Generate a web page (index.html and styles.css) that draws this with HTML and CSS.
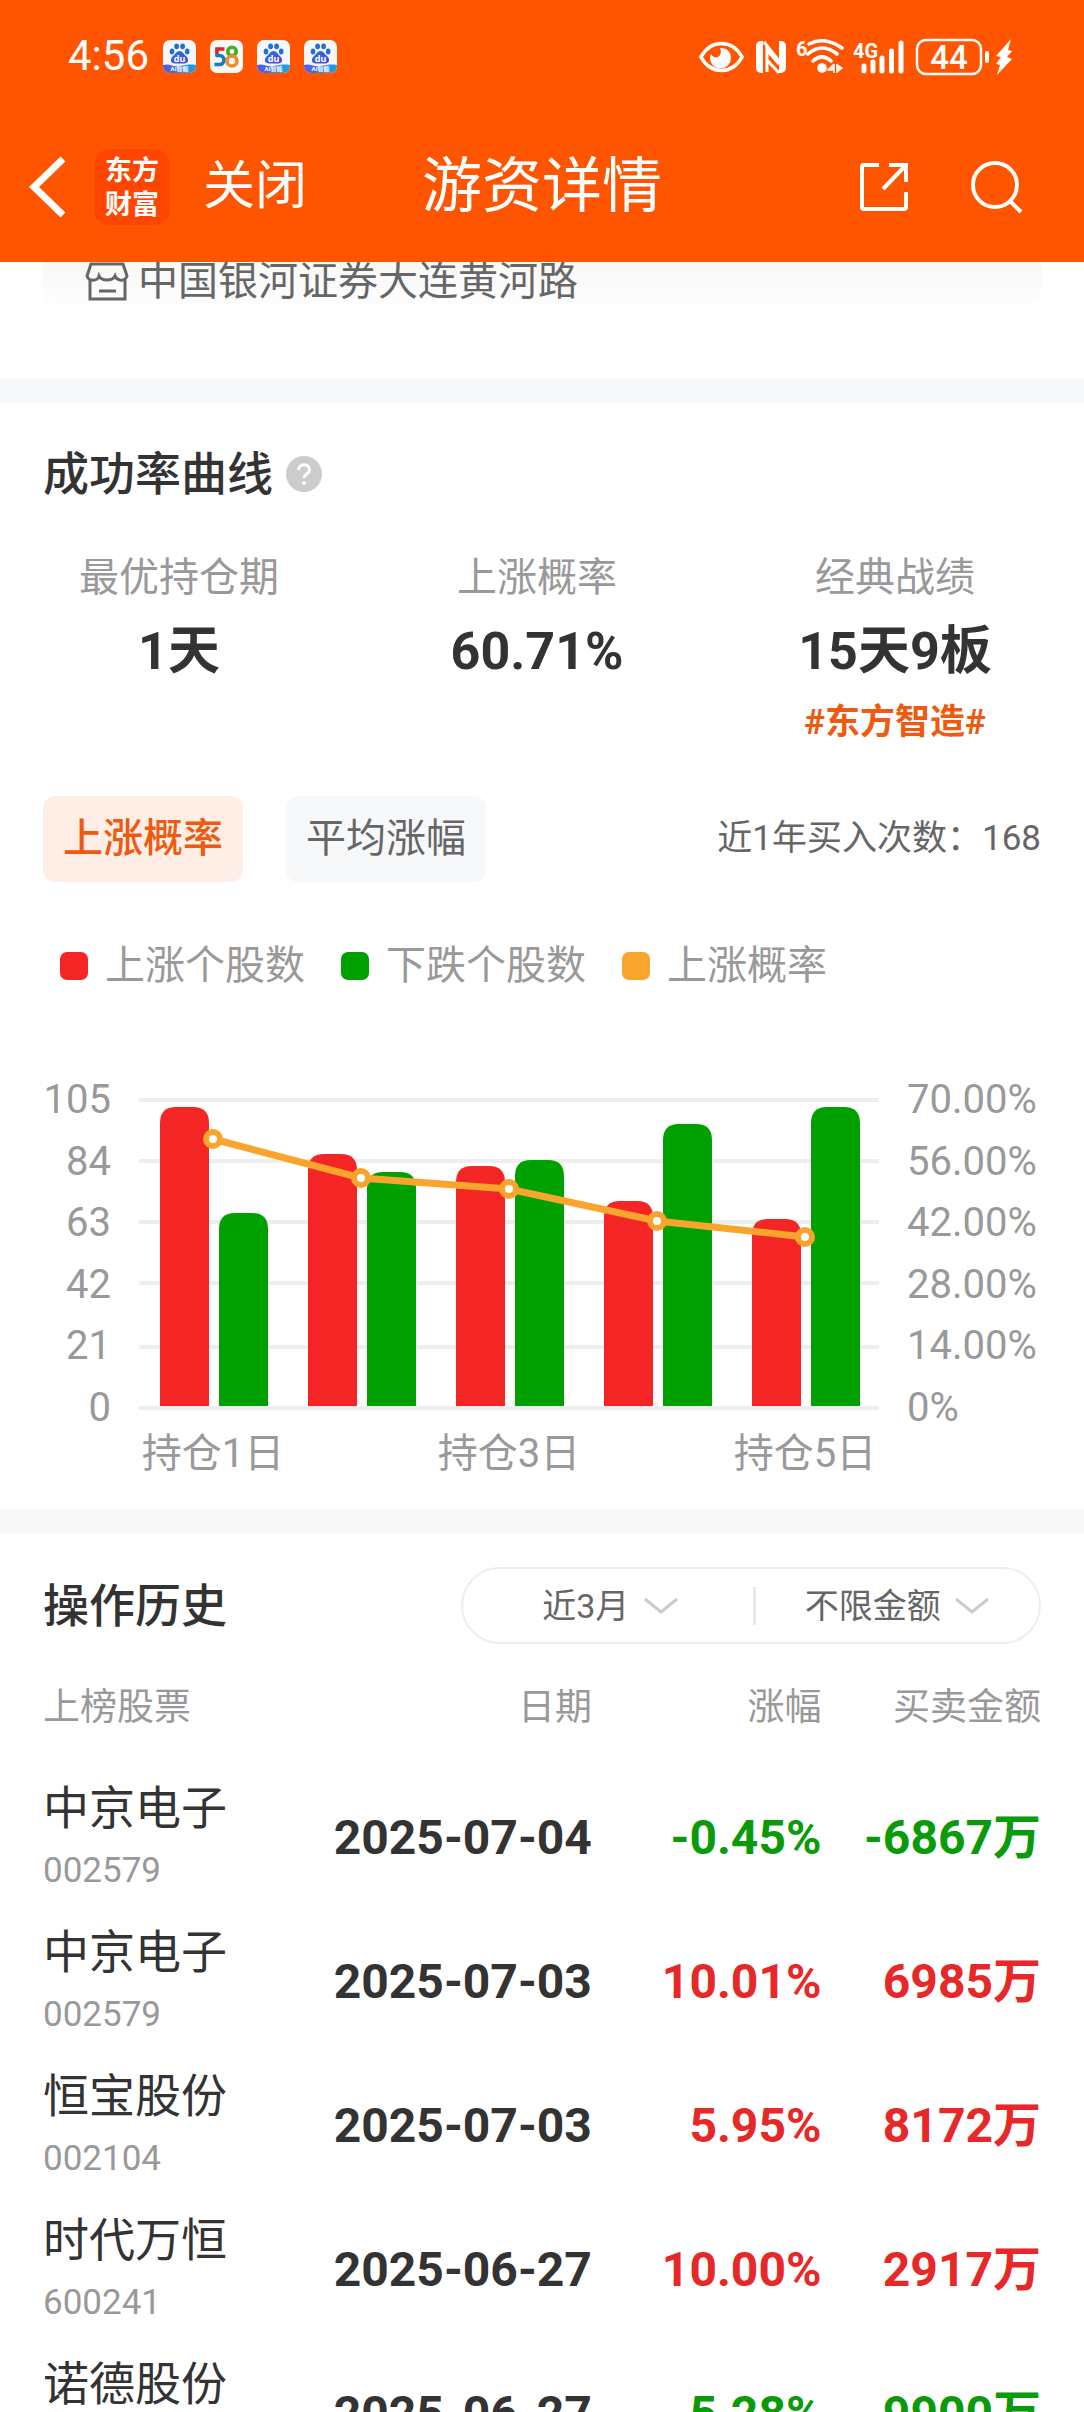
FILE: index.html
```html
<!DOCTYPE html>
<html lang="zh-CN">
<head>
    <meta charset="UTF-8">
    <meta name="viewport" content="width=device-width, initial-scale=1.0">
    <title>游资详情</title>
    <link rel="stylesheet" href="styles.css">
</head>
<body>

<!-- Shared icon shapes -->
<svg class="defs" aria-hidden="true">
    <defs>
        <linearGradient id="paw" x1="0" y1="0" x2="1" y2="1">
            <stop offset="0" stop-color="#1d78dc"/>
            <stop offset="1" stop-color="#5a3fe0"/>
        </linearGradient>
        <linearGradient id="wave" x1="0" y1="0" x2="1" y2="0">
            <stop offset="0" stop-color="#5c55e6"/>
            <stop offset="1" stop-color="#12a5e8"/>
        </linearGradient>
        <clipPath id="tile"><rect width="33" height="33" rx="7"/></clipPath>
        <symbol id="baidu" viewBox="0 0 33 33">
            <g clip-path="url(#tile)">
                <rect width="33" height="33" fill="#f6f7fb"/>
                <g fill="#1f6fd6">
                    <ellipse cx="9" cy="11.500" rx="2.300" ry="2.900"/>
                    <ellipse cx="13.600" cy="6.300" rx="2.400" ry="2.900"/>
                    <ellipse cx="19.600" cy="6.300" rx="2.400" ry="2.900"/>
                    <ellipse cx="24.200" cy="11.500" rx="2.300" ry="2.900"/>
                </g>
                <path d="M16.500 11c3 0 4 3 6.500 5s3.500 7-1.500 7.500h-10C6.500 23 7.500 18 10 16s3.500-5 6.500-5z" fill="url(#paw)"/>
                <text x="16.500" y="22" class="du">du</text>
                <path d="M0 25c6-2 9 2 16 1s11-2 17-1v8H0z" fill="url(#wave)"/>
                <text x="16.500" y="31" class="ai">AI智能</text>
            </g>
        </symbol>
        <symbol id="down" viewBox="0 0 36 20">
            <path d="M2 3l16 13L34 3" fill="none" stroke="#ccc" stroke-width="3"/>
        </symbol>
    </defs>
</svg>

<div class="page">

    <header class="header">
        <!-- Phone status bar -->
        <div class="status">
            <div class="status-left">
                <span class="time">4:56</span>
                <svg class="app-icon"><use href="#baidu"/></svg>
                <svg class="app-icon" viewBox="0 0 33 33">
                    <rect width="33" height="33" rx="7" fill="#f7f7f7"/>
                    <g fill="none" stroke-width="3.600">
                        <path d="M14.500 9H7v7" stroke="#d8252d"/>
                        <path d="M5.500 15.500h4a4.300 4.300 0 0 1 0 9h-5" stroke="#0f7ec2"/>
                        <circle cx="22" cy="11.500" r="4.200" stroke="#3fae2a"/>
                        <circle cx="22" cy="21" r="5" stroke="#ec8e2c"/>
                    </g>
                </svg>
                <svg class="app-icon"><use href="#baidu"/></svg>
                <svg class="app-icon"><use href="#baidu"/></svg>
            </div>
            <!-- Eye, NFC, wifi, signal, battery, charging -->
            <svg class="status-right" viewBox="0 0 320 40">
                <path d="M3 21C14 3 36 3 47 21 36 39 14 39 3 21z" transform="translate(1 0) scale(.94 1)" fill="none" stroke="#fff" stroke-width="3.500"/>
                <path d="M23 12c8 0 11 5 11 10a10.500 10.500 0 0 1-21 0c0-1.500.500-3 1-4 2 4 7 4.500 9 1 1.500-3 1-5 0-7z" fill="#fff"/>
                <g fill="#fff">
                    <path d="M66 5v32h-2a5 5 0 0 1-5-5V10a5 5 0 0 1 5-5z"/>
                    <path d="M82 5h2a5 5 0 0 1 5 5v22a5 5 0 0 1-5 5h-2z"/>
                </g>
                <path d="M67 6L82 25M70 36V14l12 14M70 24l12 13" fill="none" stroke="#fff" stroke-width="3"/>
                <text x="99" y="20" class="mini">6</text>
                <g fill="none" stroke="#fff" stroke-width="3.600" stroke-linecap="round">
                    <path d="M112 8q16-8 33 4"/>
                    <path d="M111 18q14-12 29 0"/>
                    <path d="M116 25q9-8 18 0"/>
                </g>
                <circle cx="125" cy="32" r="4.800" fill="#fff"/>
                <path d="M137 28v9M137 28l-6 6h6M140 28v9M140 29l5 3-5 4" fill="#fff" stroke="#fff" stroke-width="1.500"/>
                <text x="156" y="22" class="mini">4G</text>
                <path d="M167 30v5M176 26v9M185 22v13M194.500 15v20M204 7v28" stroke="#fff" stroke-width="5" stroke-linecap="round"/>
                <rect x="220" y="4" width="64" height="34" rx="9" fill="none" stroke="#fff" stroke-width="2.500"/>
                <text x="252" y="33" class="battery">44</text>
                <path d="M290 17v8" stroke="#fff" stroke-width="4" stroke-linecap="round"/>
                <path d="M314 3l-15 17 5 1-5 7 4 1-3 10 15-16-5-2 5-6-4-1z" fill="#fff"/>
            </svg>
        </div>

        <!-- App bar -->
        <nav class="nav">
            <div class="nav-left">
                <button class="icon-btn" aria-label="返回">
                    <svg width="38" height="66" viewBox="0 0 38 66"><path d="M34 5L5 33l29 28" fill="none" stroke="#fff" stroke-width="7"/></svg>
                </button>
                <a class="logo" href="#">东方<br>财富</a>
                <button class="close">关闭</button>
            </div>
            <h1 class="nav-title">游资详情</h1>
            <div class="nav-right">
                <button class="icon-btn" aria-label="分享">
                    <svg width="52" height="52" viewBox="0 0 52 52"><path d="M21 4H6q-2 0-2 2v40q0 2 2 2h40q2 0 2-2V31M31 4h17v17M48 4L25 28" fill="none" stroke="#fff" stroke-width="4"/></svg>
                </button>
                <button class="icon-btn" aria-label="搜索">
                    <svg width="54" height="54" viewBox="0 0 54 54"><circle cx="25" cy="25" r="22" fill="none" stroke="#fff" stroke-width="4"/><path d="M40 41l11 11" stroke="#fff" stroke-width="4"/></svg>
                </button>
            </div>
        </nav>
    </header>

    <main class="main">

        <div class="branch">
            <svg width="44" height="42" viewBox="0 0 44 42">
                <g fill="none" stroke="#666" stroke-width="3">
                    <path d="M6 2h32l4 12q-2 5-7 4-4-1-5-4-2 4-8 4t-8-4q-1 4-5 4-5 1-7-4z"/>
                    <path d="M5 18v19h35V18M14 29h17"/>
                </g>
            </svg>
            <span>中国银河证券大连黄河路</span>
        </div>

        <!-- Success rate -->
        <section class="section">
            <h2 class="title">成功率曲线
                <svg class="help" viewBox="0 0 36 36"><circle cx="18" cy="18" r="18" fill="#ccc"/><path d="M12.500 14c0-7 11-7 11 0 0 4-5.500 4-5.500 8" fill="none" stroke="#fff" stroke-width="3"/><circle cx="18" cy="27" r="2" fill="#fff"/></svg>
            </h2>

            <div class="stats">
                <div class="stat">
                    <div class="stat-label">最优持仓期</div>
                    <div class="stat-value">1天</div>
                </div>
                <div class="stat">
                    <div class="stat-label">上涨概率</div>
                    <div class="stat-value">60.71%</div>
                </div>
                <div class="stat">
                    <div class="stat-label">经典战绩</div>
                    <div class="stat-value">15天9板</div>
                    <a class="stat-tag" href="#">#东方智造#</a>
                </div>
            </div>

            <div class="tabs">
                <button class="tab active">上涨概率</button>
                <button class="tab">平均涨幅</button>
                <span class="count">近1年买入次数：168</span>
            </div>

            <div class="legend">
                <span class="legend-item"><i class="dot red-bg"></i>上涨个股数</span>
                <span class="legend-item"><i class="dot green-bg"></i>下跌个股数</span>
                <span class="legend-item"><i class="dot orange-bg"></i>上涨概率</span>
            </div>

            <div class="chart">
                <div class="axis axis-left">
                    <span>105</span><span>84</span><span>63</span><span>42</span><span>21</span><span>0</span>
                </div>
                <div class="plot">
                    <svg class="plot-svg" viewBox="0 0 740 312">
                        <path class="grid-line" d="M0 2h740M0 63h740M0 124h740M0 185h740M0 249h740M0 310h740"/>
                        <!-- up -->
                        <g fill="#f42525">
                            <path d="M21 308V25q0-16 16-16h17q16 0 16 16v283z"/>
                            <path d="M169 308V72q0-16 16-16h17q16 0 16 16v236z"/>
                            <path d="M317 308V84q0-16 16-16h17q16 0 16 16v224z"/>
                            <path d="M465 308V119q0-16 16-16h17q16 0 16 16v189z"/>
                            <path d="M613 308V137q0-16 16-16h17q16 0 16 16v171z"/>
                        </g>
                        <!-- down -->
                        <g fill="#00a000">
                            <path d="M80 308V131q0-16 16-16h17q16 0 16 16v177z"/>
                            <path d="M228 308V90q0-16 16-16h17q16 0 16 16v218z"/>
                            <path d="M376 308V78q0-16 16-16h17q16 0 16 16v230z"/>
                            <path d="M524 308V42q0-16 16-16h17q16 0 16 16v266z"/>
                            <path d="M672 308V25q0-16 16-16h17q16 0 16 16v283z"/>
                        </g>
                        <!-- rate -->
                        <path d="M74 41L222 80 370 91 518 123 666 139" fill="none" stroke="#f9a52d" stroke-width="7"/>
                        <g fill="#fff" stroke="#f9a52d" stroke-width="6">
                            <circle cx="74" cy="41" r="7"/>
                            <circle cx="222" cy="80" r="7"/>
                            <circle cx="370" cy="91" r="7"/>
                            <circle cx="518" cy="123" r="7"/>
                            <circle cx="666" cy="139" r="7"/>
                        </g>
                    </svg>
                    <div class="days">
                        <span>持仓1日</span><span></span><span>持仓3日</span><span></span><span>持仓5日</span>
                    </div>
                </div>
                <div class="axis axis-right">
                    <span>70.00%</span><span>56.00%</span><span>42.00%</span><span>28.00%</span><span>14.00%</span><span>0%</span>
                </div>
            </div>
        </section>

        <!-- History -->
        <section class="section history">
            <div class="history-head">
                <h2 class="title">操作历史</h2>
                <div class="filters">
                    <label class="filter">
                        <select aria-label="时间范围">
                            <option>近3月</option>
                            <option>近6月</option>
                            <option>近1年</option>
                        </select>
                        <svg width="36" height="20"><use href="#down"/></svg>
                    </label>
                    <label class="filter">
                        <select aria-label="金额">
                            <option>不限金额</option>
                        </select>
                        <svg width="36" height="20"><use href="#down"/></svg>
                    </label>
                </div>
            </div>

            <table class="table">
                <thead>
                    <tr><th class="col-name">上榜股票</th><th class="col-date">日期</th><th class="col-rate">涨幅</th><th class="col-sum">买卖金额</th></tr>
                </thead>
                <tbody>
                    <tr>
                        <td><div class="name">中京电子</div><div class="code">002579</div></td>
                        <td>2025-07-04</td><td class="green">-0.45%</td><td class="green">-6867万</td>
                    </tr>
                    <tr>
                        <td><div class="name">中京电子</div><div class="code">002579</div></td>
                        <td>2025-07-03</td><td class="red">10.01%</td><td class="red">6985万</td>
                    </tr>
                    <tr>
                        <td><div class="name">恒宝股份</div><div class="code">002104</div></td>
                        <td>2025-07-03</td><td class="red">5.95%</td><td class="red">8172万</td>
                    </tr>
                    <tr>
                        <td><div class="name">时代万恒</div><div class="code">600241</div></td>
                        <td>2025-06-27</td><td class="red">10.00%</td><td class="red">2917万</td>
                    </tr>
                    <tr>
                        <td><div class="name">诺德股份</div><div class="code">600110</div></td>
                        <td>2025-06-27</td><td class="green">-5.28%</td><td class="green">-9900万</td>
                    </tr>
                </tbody>
            </table>
        </section>

    </main>
</div>

</body>
</html>
```

FILE: styles.css
```css
* {
    box-sizing: border-box;
}

body {
    margin: 0;
    background-color: #fff;
    font-family: Roboto, "Noto Sans CJK SC", sans-serif;
    color: #333;
}

h1, h2 {
    margin: 0;
}

a {
    text-decoration: none;
}

button, select {
    margin: 0;
    padding: 0;
    border: none;
    background: none;
    font-family: inherit;
    color: inherit;
    cursor: pointer;
}

svg {
    display: block;
    flex-shrink: 0;
}

.defs {
    position: absolute;
    width: 0;
    height: 0;
}

.page {
    display: flex;
    flex-direction: column;
    height: 100vh;
}

/* Header */
.header {
    flex-shrink: 0;
    background-color: #ff5500;
    color: #fff;
}

.status {
    display: flex;
    justify-content: space-between;
    align-items: center;
    height: 112px;
    padding: 0 67px 0 68px;
}

.status-left {
    display: flex;
    align-items: center;
    gap: 14px;
}

.time {
    font-size: 42px;
    line-height: 60px;
}

.app-icon {
    width: 33px;
    height: 33px;
}

.du {
    font: bold 9px "Noto Sans", sans-serif;
    fill: #fff;
    text-anchor: middle;
}

.ai {
    font-size: 6px;
    font-weight: bold;
    fill: #fff;
    text-anchor: middle;
}

.status-right {
    width: 320px;
    height: 40px;
    overflow: visible;
}

.mini {
    font-size: 20px;
    font-weight: bold;
    fill: #fff;
}

.battery {
    font-size: 33px;
    font-weight: 500;
    fill: #fff;
    text-anchor: middle;
}

.nav {
    display: grid;
    grid-template-columns: 1fr auto 1fr;
    align-items: center;
    height: 150px;
    padding: 0 29px;
}

.nav-left {
    display: flex;
    align-items: center;
    gap: 27px;
}

.nav-right {
    display: flex;
    justify-content: flex-end;
    align-items: center;
    gap: 60px;
    padding-right: 31px;
}

.logo {
    display: block;
    width: 76px;
    height: 76px;
    padding: 5px 0;
    border-radius: 16px;
    background-color: #ff4600;
    color: #fff;
    font-size: 27px;
    font-weight: bold;
    line-height: 34px;
    text-align: center;
}

.close {
    font-size: 52px;
    line-height: 60px;
    margin-left: 6px;
}

.nav-title {
    font-size: 60px;
    font-weight: normal;
    line-height: 72px;
}

/* Content */
.main {
    flex: 1;
    min-height: 0;
    overflow-y: auto;
    scrollbar-width: none;
}

.branch {
    display: flex;
    gap: 9px;
    height: 42px;
    margin: 0 43px 75px;
    padding-left: 42px;
    border-radius: 0 0 12px 12px;
    background: linear-gradient(#f8f8fa, #fdfdfd);
    color: #666;
    font-size: 40px;
    line-height: 40px;
}

.section {
    padding: 41px 43px 30px;
    border-top: 24px solid #f7f8fa;
}

.title {
    display: flex;
    align-items: center;
    gap: 13px;
    font-size: 46px;
    font-weight: 500;
    line-height: 60px;
}

.help {
    width: 36px;
    height: 36px;
}

.stats {
    display: grid;
    grid-template-columns: 1fr 1fr 1fr;
    margin: 46px -33px 0 -43px;
    text-align: center;
}

.stat-label {
    color: #999;
    font-size: 40px;
    line-height: 56px;
}

.stat-value {
    margin-top: 10px;
    font-size: 52px;
    font-weight: bold;
    line-height: 72px;
}

.stat-tag {
    display: block;
    margin-top: 10px;
    color: #ee5a10;
    font-size: 35px;
    font-weight: bold;
    line-height: 50px;
}

.tabs {
    display: flex;
    align-items: center;
    gap: 43px;
    margin-top: 48px;
}

.tab {
    height: 86px;
    padding: 0 20px;
    border-radius: 12px;
    background-color: #f7f8fa;
    color: #666;
    font-size: 40px;
    line-height: 56px;
}

.tab.active {
    background-color: #ffeee6;
    color: #ee5a10;
    font-weight: 500;
}

.count {
    margin-left: auto;
    color: #666;
    font-size: 35px;
    line-height: 50px;
}

.legend {
    display: flex;
    gap: 36px;
    margin-top: 56px;
    padding-left: 17px;
    color: #999;
    font-size: 40px;
    line-height: 56px;
}

.legend-item {
    display: flex;
    align-items: center;
    gap: 17px;
}

.dot {
    width: 28px;
    height: 28px;
    border-radius: 7px;
}

.red-bg {
    background-color: #f42525;
}

.green-bg {
    background-color: #00a000;
}

.orange-bg {
    background-color: #f9a52d;
}

/* Chart */
.chart {
    display: flex;
    align-items: flex-start;
    gap: 28px;
    margin-top: 80px;
    color: #999;
    font-size: 40px;
}

.axis {
    display: flex;
    flex-direction: column;
    justify-content: space-between;
    height: 360px;
    line-height: 52px;
    white-space: nowrap;
}

.axis-left {
    width: 68px;
    text-align: right;
}

.axis-right {
    width: 134px;
}

.plot {
    flex: 1;
    padding-top: 24px;
}

.plot-svg {
    width: 100%;
}

.grid-line {
    stroke: #eee;
    stroke-width: 4;
}

.days {
    display: grid;
    grid-template-columns: repeat(5, 1fr);
    margin-top: 19px;
    line-height: 50px;
    text-align: center;
    white-space: nowrap;
}

/* History */
.history {
    padding-top: 34px;
}

.history-head {
    display: flex;
    justify-content: space-between;
    align-items: center;
}

.filters {
    display: flex;
    align-items: center;
    width: 580px;
    height: 77px;
    padding-left: 6px;
    border: 2px solid #eee;
    border-radius: 39px;
}

.filter {
    display: flex;
    flex: 1;
    justify-content: center;
    align-items: center;
    gap: 13px;
    height: 38px;
    color: #666;
}

.filter + .filter {
    border-left: 3px solid #e8e8e8;
}

.filter select {
    appearance: none;
    font-size: 34px;
    line-height: 50px;
}

.table {
    width: 100%;
    margin-top: 36px;
    border-collapse: collapse;
    table-layout: fixed;
}

.table th {
    padding: 0 0 30px;
    color: #999;
    font-size: 37px;
    font-weight: normal;
    line-height: 56px;
    text-align: right;
}

.table td {
    padding: 9px 0;
    font-size: 48px;
    font-weight: bold;
    line-height: 66px;
    text-align: right;
    white-space: nowrap;
}

.table th:first-child,
.table td:first-child {
    text-align: left;
    font-weight: normal;
}

.col-name { width: 23%; }
.col-date { width: 32%; }
.col-rate { width: 23%; }
.col-sum { width: 22%; }

.name {
    font-size: 46px;
}

.code {
    color: #999;
    font-size: 35px;
    line-height: 60px;
}

.table .red {
    color: #e62828;
}

.table .green {
    color: #0a9a0a;
}
```
